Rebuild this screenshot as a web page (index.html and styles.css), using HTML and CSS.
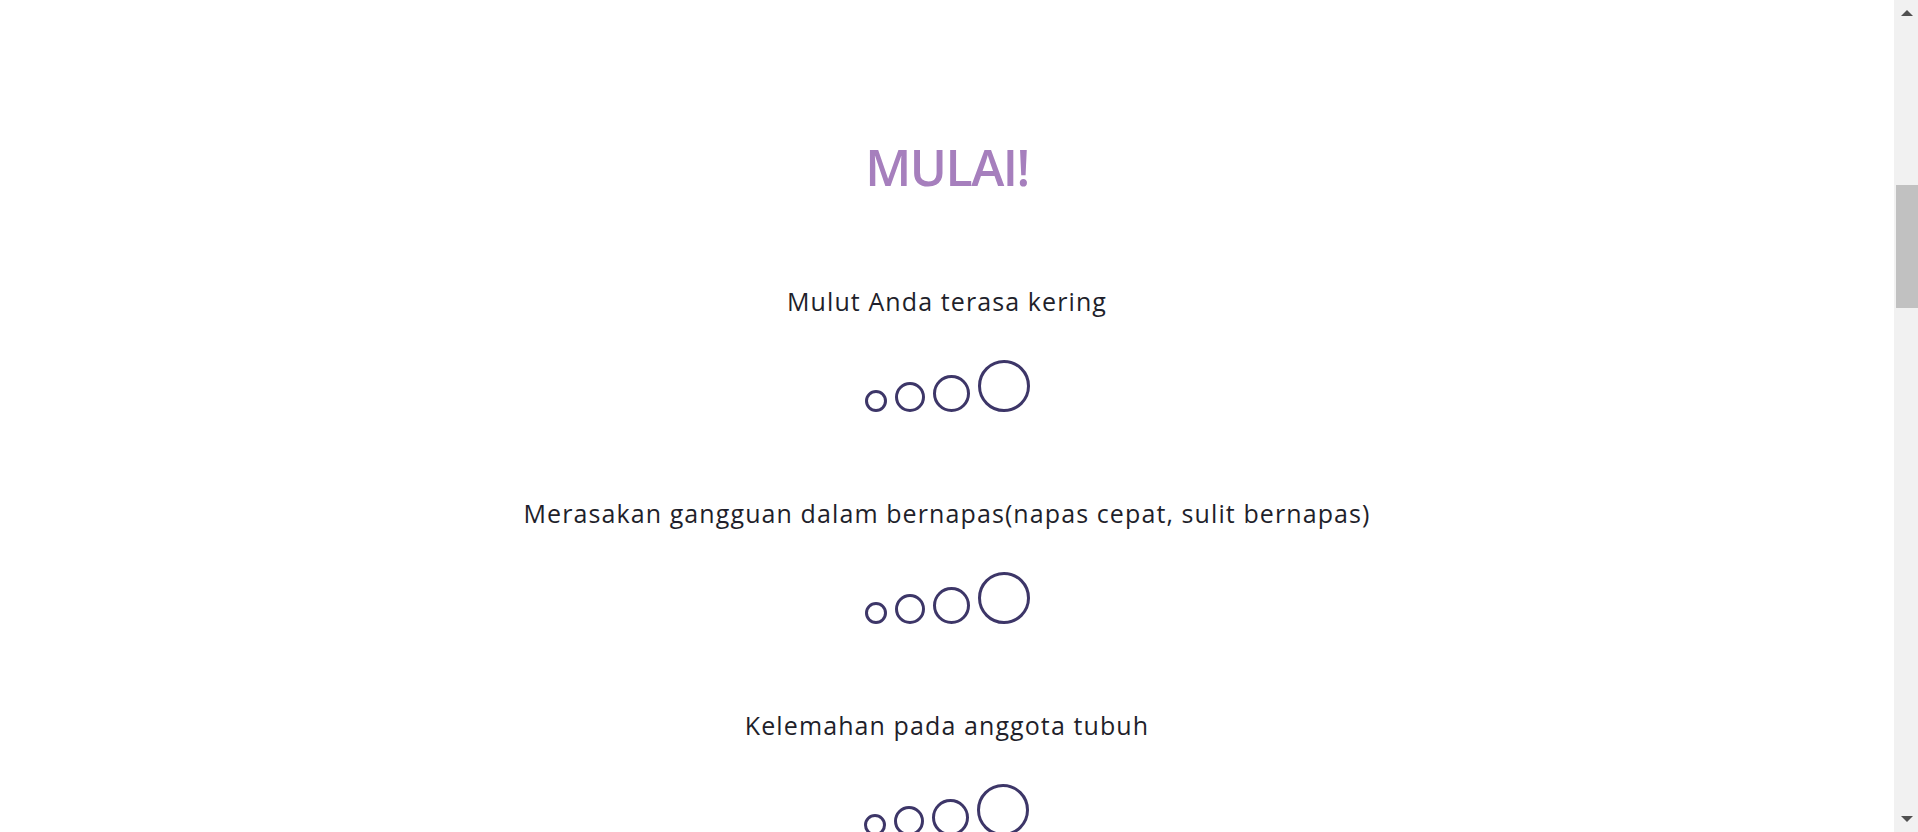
FILE: index.html
```html
<!DOCTYPE html>
<html lang="id">
<head>
<meta charset="utf-8">
<title>Mulai</title>
<link rel="stylesheet" href="styles.css">
</head>
<body>
<div class="page">
  <main class="content">
    <h1 class="title">MULAI!</h1>
    <section class="question">
      <p class="q-text">Mulut Anda terasa kering</p>
      <div class="scale">
        <span class="dot s1"></span><span class="dot s2"></span><span class="dot s3"></span><span class="dot s4"></span>
      </div>
    </section>
    <section class="question">
      <p class="q-text">Merasakan gangguan dalam bernapas(napas cepat, sulit bernapas)</p>
      <div class="scale">
        <span class="dot s1"></span><span class="dot s2"></span><span class="dot s3"></span><span class="dot s4"></span>
      </div>
    </section>
    <section class="question">
      <p class="q-text">Kelemahan pada anggota tubuh</p>
      <div class="scale">
        <span class="dot s1"></span><span class="dot s2"></span><span class="dot s3"></span><span class="dot s4"></span>
      </div>
    </section>
  </main>
  <aside class="scrollbar">
    <div class="sb-btn"><span class="arrow-up"></span></div>
    <div class="sb-thumb"></div>
    <div class="sb-fill"></div>
    <div class="sb-btn"><span class="arrow-down"></span></div>
  </aside>
</div>
</body>
</html>
```
FILE: styles.css
```css
html, body {
  margin: 0;
  padding: 0;
  height: 100%;
  overflow: hidden;
  background: #ffffff;
}
.page {
  display: flex;
  height: 832px;
  overflow: hidden;
}
.content {
  flex: 1;
  display: flex;
  flex-direction: column;
  align-items: center;
  padding-top: 137px;
  font-family: "Open Sans", "Liberation Sans", sans-serif;
}
.title {
  margin: 0;
  font-size: 50px;
  line-height: 60px;
  font-weight: 600;
  color: #a67fbd;
  letter-spacing: -1.5px;
}
.question {
  display: flex;
  flex-direction: column;
  align-items: center;
}
.question:first-of-type {
  margin-top: 86px;
}
.q-text {
  margin: 0;
  font-size: 25px;
  line-height: 36px;
  letter-spacing: 1.1px;
  color: #1f1f2b;
}
.scale {
  display: flex;
  align-items: flex-end;
  gap: 8px;
  height: 52px;
  margin-top: 41px;
  margin-bottom: 83px;
}
.dot {
  box-sizing: border-box;
  border: 3px solid #3d3668;
  border-radius: 50%;
  display: block;
}
.s1 { width: 22px; height: 22px; }
.s2 { width: 30px; height: 30px; }
.s3 { width: 37px; height: 37px; }
.s4 { width: 52px; height: 52px; }
.scrollbar {
  width: 24px;
  flex: 0 0 24px;
  background: #f1f1f1;
  display: flex;
  flex-direction: column;
}
.sb-btn {
  height: 26px;
  display: flex;
  align-items: center;
  justify-content: center;
  padding-left: 2px;
}
.arrow-up {
  width: 0;
  height: 0;
  border-left: 6px solid transparent;
  border-right: 6px solid transparent;
  border-bottom: 6px solid #505050;
}
.arrow-down {
  width: 0;
  height: 0;
  border-left: 6px solid transparent;
  border-right: 6px solid transparent;
  border-top: 6px solid #505050;
}
.sb-thumb {
  margin-top: 159px;
  margin-left: 2px;
  height: 123px;
  background: #c1c1c1;
}
.sb-fill {
  flex: 1;
}
```
